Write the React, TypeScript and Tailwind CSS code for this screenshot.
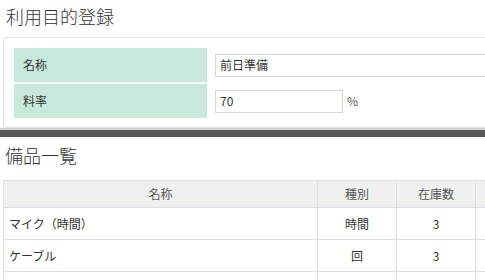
const font = { fontFamily: '"Noto Sans CJK JP", "Noto Sans", sans-serif' }

const items = [
  { name: 'マイク（時間）', kind: '時間', stock: 3 },
  { name: 'ケーブル', kind: '回', stock: 3 },
  { name: '', kind: '', stock: '' },
]

export default function App() {
  return (
    <div className="w-[485px] h-[280px] overflow-hidden bg-white text-[#333]" style={font}>
      <div className="h-[37px] pl-[6px] pt-[2px] text-[18px] leading-[28px] font-light text-[#333]">利用目的登録</div>

      <div className="ml-[3px] w-[560px] border border-[#e2e2e2] rounded-[3px] pt-[10px] pl-[10px] pb-[9px]">
        <div className="flex flex-col gap-[2px]">
          <div className="flex h-[34px]">
            <div className="w-[193px] shrink-0 bg-[#c8e8dc] pl-[9px] flex items-center text-[12px]">名称</div>
            <div className="flex-1 pl-[8px] flex items-center">
              <div className="w-[400px] h-[23px] border border-[#d6d6d6] pl-[4px] flex items-center text-[12px]">前日準備</div>
            </div>
          </div>
          <div className="flex h-[34px]">
            <div className="w-[193px] shrink-0 bg-[#c8e8dc] pl-[9px] flex items-center text-[12px]">料率</div>
            <div className="flex-1 pl-[8px] flex items-center gap-[4px]">
              <div className="w-[128px] h-[23px] border border-[#d6d6d6] pl-[4px] flex items-center text-[12px]">70</div>
              <span className="text-[12px] text-[#555]">%</span>
            </div>
          </div>
        </div>
      </div>

      <div className="h-[2px] bg-[#d2d2d2]"></div>
      <div className="h-[7px] bg-[#575757]"></div>

      <div className="h-[43px] pl-[5px] pt-[4px] text-[18px] leading-[28px] font-light text-[#333]">備品一覧</div>

      <table className="ml-[3px] w-[560px] border-collapse text-[12px] table-fixed">
        <colgroup>
          <col className="w-[314px]" />
          <col className="w-[79px]" />
          <col className="w-[79px]" />
          <col />
        </colgroup>
        <thead>
          <tr className="h-[27px] bg-[#f0f0f0] text-[#555]">
            <th className="border border-[#d9e0e7] font-normal">名称</th>
            <th className="border border-[#d9e0e7] font-normal">種別</th>
            <th className="border border-[#d9e0e7] font-normal">在庫数</th>
            <th className="border border-[#d9e0e7] font-normal"></th>
          </tr>
        </thead>
        <tbody>
          {items.map((item, i) => (
            <tr key={i} className="h-[32px]">
              <td className="border border-[#d9e0e7] pl-[5px]">{item.name}</td>
              <td className="border border-[#d9e0e7] text-center">{item.kind}</td>
              <td className="border border-[#d9e0e7] text-center">{item.stock}</td>
              <td className="border border-[#d9e0e7]"></td>
            </tr>
          ))}
        </tbody>
      </table>
    </div>
  )
}
